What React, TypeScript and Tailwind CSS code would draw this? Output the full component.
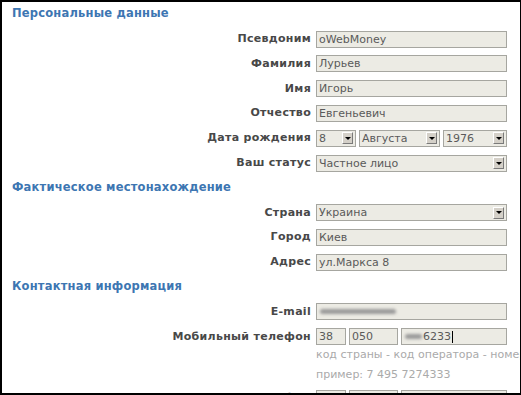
import type { ReactNode } from "react"

const font = { fontFamily: '"DejaVu Sans", Verdana, sans-serif' }

function Heading({ children }: { children: ReactNode }) {
  return (
    <div className="h-[24.8px] pl-[10px] pt-[3px] text-[11.5px] font-bold leading-[16px] tracking-[0.2px] text-[#3d76b2]">
      {children}
    </div>
  )
}

function Row({ label, children }: { label: string; children: ReactNode }) {
  return (
    <div className="flex h-[24.8px] items-center">
      <div className="w-[309px] whitespace-nowrap text-right text-[11px] font-bold tracking-[0.3px] text-[#484848]">{label}</div>
      <div className="ml-[5px] flex w-[191px] gap-[3px]">{children}</div>
    </div>
  )
}

function Field({ value, className = "w-full", children }: { value?: string; className?: string; children?: ReactNode }) {
  return (
    <div
      className={`flex h-[17px] items-center overflow-hidden border border-[#a6a6a0] bg-[#ecebe4] pl-[2px] text-[11px] leading-none text-[#5a5a5a] ${className}`}
    >
      {value}
      {children}
    </div>
  )
}

function Select({ value, className = "w-full" }: { value: string; className?: string }) {
  return (
    <div
      className={`flex h-[17px] items-center justify-between border border-[#a6a6a0] bg-[#ecebe4] pl-[2px] pr-[2px] text-[11px] leading-none text-[#5a5a5a] ${className}`}
    >
      <span>{value}</span>
      <div className="flex h-[12px] w-[11px] items-center justify-center border border-b-[#7a7a7a] border-l-white border-r-[#7a7a7a] border-t-white bg-[#d4d0c8]">
        <div className="h-0 w-0 border-l-[3px] border-r-[3px] border-t-[3px] border-l-transparent border-r-transparent border-t-black" />
      </div>
    </div>
  )
}

export default function App() {
  return (
    <div
      style={font}
      className="h-[395px] w-[521px] overflow-hidden border-b-2 border-l-2 border-r border-t-2 border-black bg-white"
    >
      <Heading>Персональные данные</Heading>
      <Row label="Псевдоним">
        <Field value="oWebMoney" />
      </Row>
      <Row label="Фамилия">
        <Field value="Лурьев" />
      </Row>
      <Row label="Имя">
        <Field value="Игорь" />
      </Row>
      <Row label="Отчество">
        <Field value="Евгеньевич" />
      </Row>
      <Row label="Дата рождения">
        <Select value="8" className="w-[40px]" />
        <Select value="Августа" className="w-[81px]" />
        <Select value="1976" className="w-[64px]" />
      </Row>
      <Row label="Ваш статус">
        <Select value="Частное лицо" />
      </Row>

      <Heading>Фактическое местонахождение</Heading>
      <Row label="Страна">
        <Select value="Украина" />
      </Row>
      <Row label="Город">
        <Field value="Киев" />
      </Row>
      <Row label="Адрес">
        <Field value="ул.Маркса 8" />
      </Row>

      <Heading>Контактная информация</Heading>
      <Row label="E-mail">
        <Field>
          <div className="ml-[1px] h-[5px] w-[76px] rounded-full bg-[#9a9a9a] blur-[1.5px]" />
        </Field>
      </Row>
      <Row label="Мобильный телефон">
        <Field value="38" className="w-[30px]" />
        <Field value="050" className="w-[49px]" />
        <Field className="w-[106px]">
          <div className="ml-[1px] mr-[1px] h-[5px] w-[17px] rounded-full bg-[#9a9a9a] blur-[1.5px]" />
          6233
          <div className="ml-[1px] h-[12px] w-px bg-black" />
        </Field>
      </Row>
      <div className="-mt-[4px] whitespace-nowrap pl-[314px] text-[11px] leading-[20px] text-[#aaa]">
        <div>код страны - код оператора - номер</div>
        <div>пример: 7 495 7274333</div>
      </div>
      <div className="mt-[1px]">
        <Row label="Домашний телефон">
          <Field className="w-[30px]" />
          <Field className="w-[49px]" />
          <Field className="w-[106px]" />
        </Row>
      </div>
    </div>
  )
}
